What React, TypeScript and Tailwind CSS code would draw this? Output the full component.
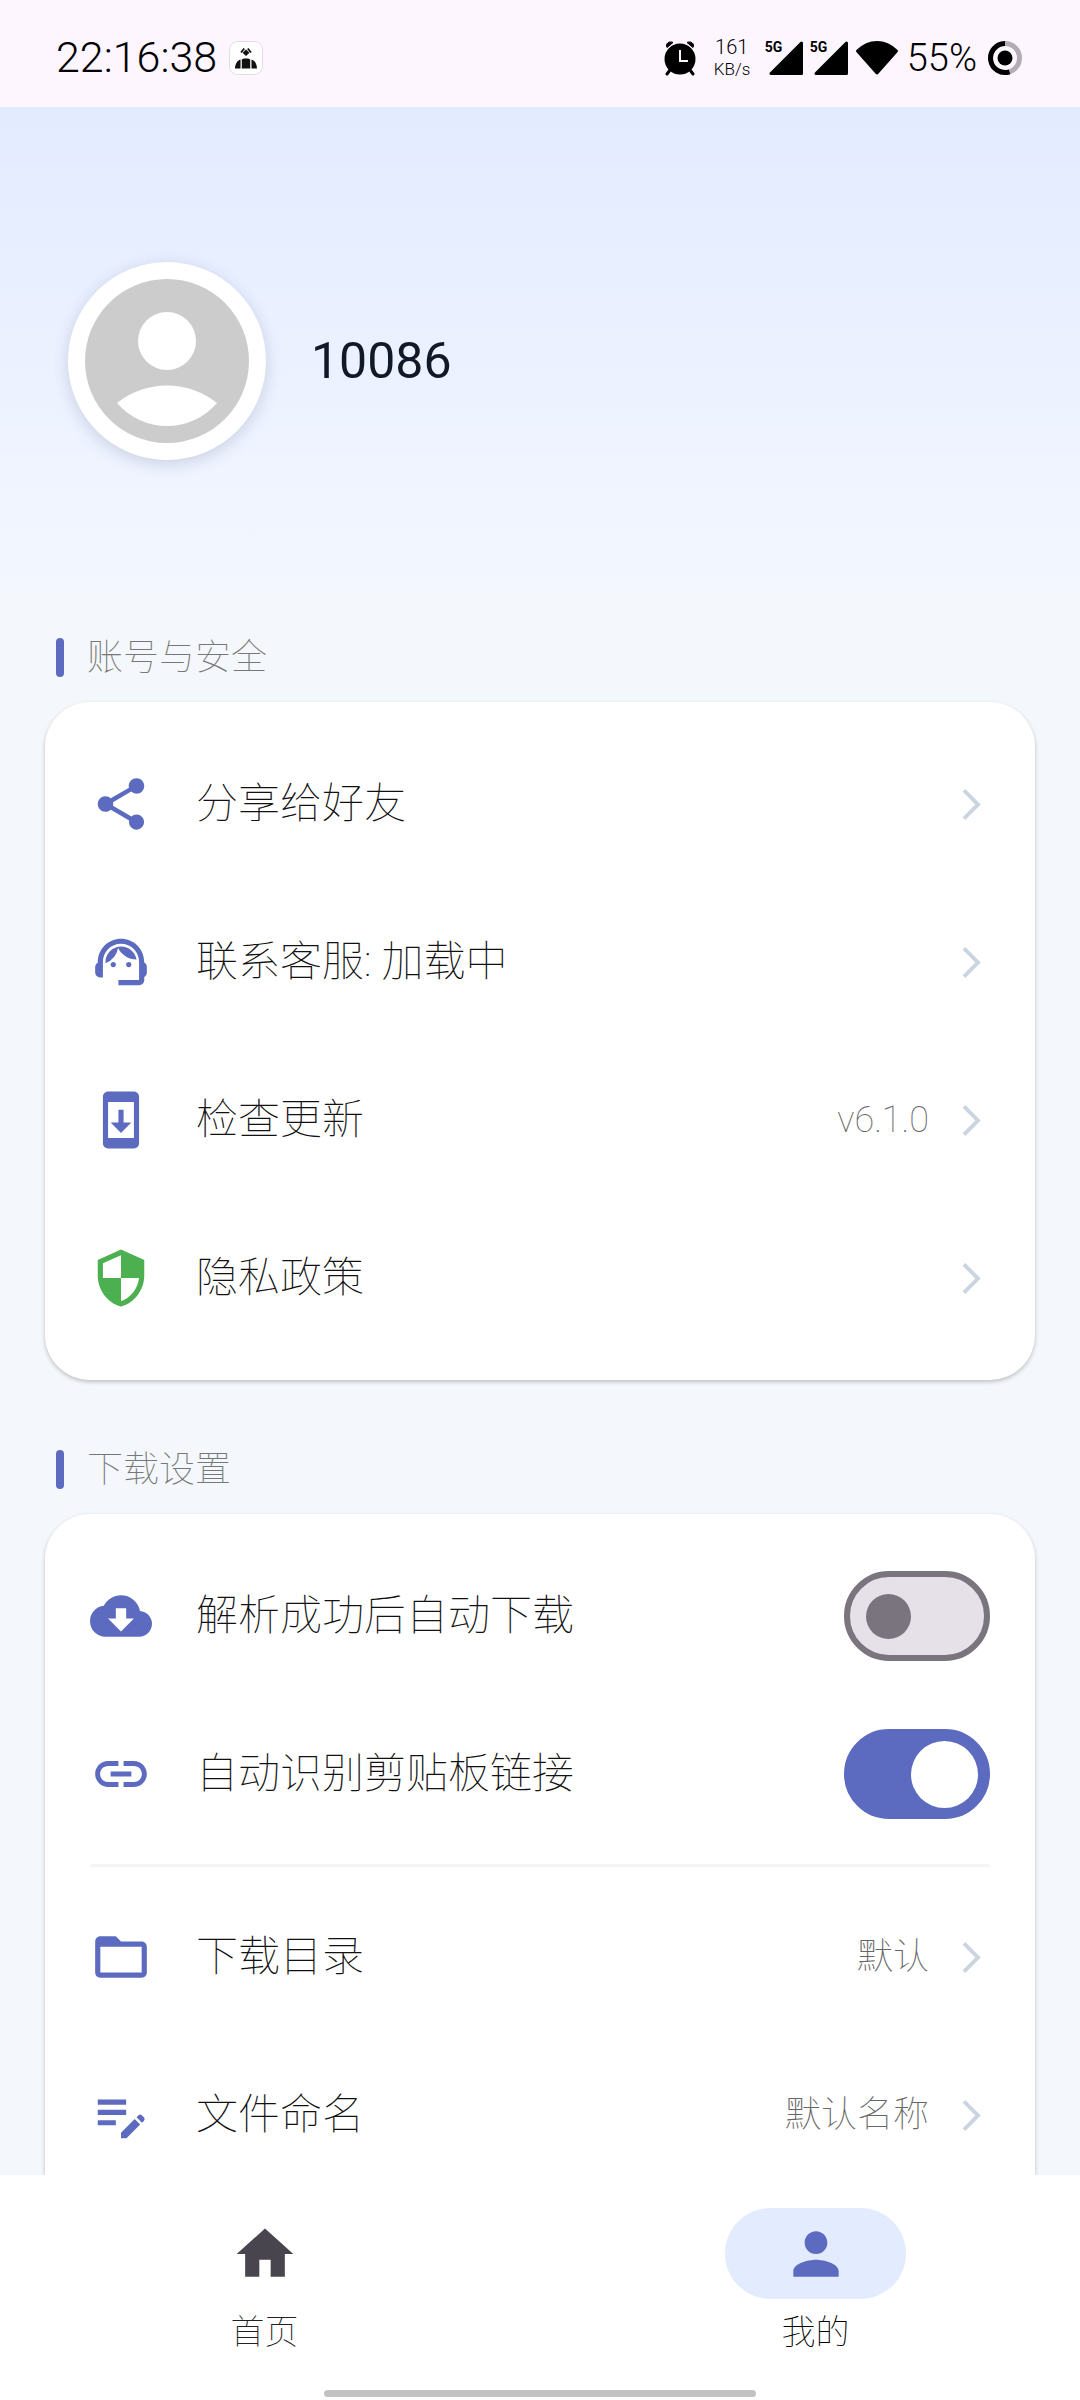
import type { ReactNode } from "react";
import type { IconType } from "react-icons";
import {
  MdArrowForwardIos,
  MdCloudDownload,
  MdEditNote,
  MdFolderOpen,
  MdHome,
  MdLink,
  MdPerson,
  MdSecurity,
  MdShare,
  MdSupportAgent,
  MdSystemUpdate,
} from "react-icons/md";

function Signal() {
  return (
    <div className="relative">
      <svg viewBox="0 0 38 36" className="h-9 w-[38px]" aria-hidden>
        <path d="M5 33.5 35.5 3v30.5z" stroke="#000" strokeWidth="3" strokeLinejoin="round" />
      </svg>
      <span className="absolute -left-px top-0 font-[Roboto] text-sm leading-[14px] font-bold">5G</span>
    </div>
  );
}

function StatusBar() {
  return (
    <div className="flex h-[107px] shrink-0 items-center justify-between bg-[#fef6ff] pt-2 pr-[57px] pl-14 text-black">
      <div className="flex items-center gap-3">
        <span className="text-[43px] leading-none">22:16:38</span>
        <svg viewBox="0 0 34 34" className="size-[34px]" aria-hidden>
          <rect x="0.5" y="0.5" width="33" height="33" rx="8" fill="#fff" stroke="#e2dde4" />
          <path d="M17 8.500l3.500 3.200L17 15l-3.500-3.300z" fill="#111" />
          <path d="M12 11.500l3.200-4M22 11.500l-3.200-4" stroke="#111" strokeWidth="1.800" />
          <path d="M12.800 18.500l2-1h4.400l2 1v9h-8.400zM11.500 18.500v9H6c.3-4.500 2-8 5.500-9zM22.500 18.500v9H28c-.3-4.500-2-8-5.500-9z" fill="#111" />
        </svg>
      </div>
      <div className="flex items-center">
        <svg viewBox="0 0 32 36" className="h-9 w-8" aria-hidden>
          <circle cx="16" cy="19" r="15.500" />
          <path d="M3 7.500C1 4 5 .5 9 2.500zM29 7.500C31 4 27 .5 23 2.500z" stroke="#000" strokeLinejoin="round" />
          <path d="M6 30l-3 4M26 30l3 4" stroke="#000" strokeWidth="3" strokeLinecap="round" />
          <path d="M16 10v11h8" fill="none" stroke="#fef6ff" strokeWidth="2" />
        </svg>
        <div className="ml-[18px] w-9 text-center">
          <div className="text-xl leading-[22px]">161</div>
          <div className="text-[17px] leading-[22px]">KB/s</div>
        </div>
        <div className="ml-4 flex gap-[7px]">
          <Signal />
          <Signal />
        </div>
        <svg viewBox="0 0 44 36" className="ml-1.5 h-9 w-11" aria-hidden>
          <path d="M2.500 11C14-.5 30-.5 41.500 11L22 33z" stroke="#000" strokeWidth="3" strokeLinejoin="round" />
        </svg>
        <span className="ml-2 text-[38px] leading-none">55%</span>
        <svg viewBox="0 0 36 36" className="ml-2.5 size-9" fill="none" aria-hidden>
          <circle cx="18" cy="18" r="14.500" stroke="#b4acb5" strokeWidth="5" />
          <path d="M18 3.500a14.500 14.500 0 1 0 4.500 28.300" stroke="#000" strokeWidth="5" />
          <circle cx="18" cy="18" r="7.500" fill="#000" />
        </svg>
      </div>
    </div>
  );
}

function Profile() {
  return (
    <header className="bg-linear-to-b from-[#e3ebff] to-[#f3f7ff] px-[68px] pt-[155px] pb-[132px]">
      <div className="flex items-center gap-[45px]">
        <div className="size-[198px] rounded-full bg-white p-[17px] shadow-[0_4px_16px_rgba(60,70,110,0.2)]">
          <svg viewBox="0 0 164 164" className="size-full" role="img" aria-label="头像">
            <circle cx="82" cy="82" r="82" fill="#ccc" />
            <circle cx="82" cy="62" r="29" fill="#fff" />
            <path d="M32 124a80 80 0 0 1 100 0a66 66 0 0 1-100 0z" fill="#fff" />
          </svg>
        </div>
        <h1 className="text-[50px] leading-none font-normal text-[#111827]">10086</h1>
      </div>
    </header>
  );
}

function Section({ title, children }: { title: string; children: ReactNode }) {
  return (
    <section className="px-[45px]">
      <div className="mb-5 flex h-[49px] items-center gap-[23px] pl-[11px]">
        <span className="h-[39px] w-2 rounded-full bg-[#5c6bc0]" />
        <h2 className="text-4xl leading-none font-thin text-[#777]">{title}</h2>
      </div>
      <div className="rounded-[45px] bg-white px-[45px] py-[23px] shadow-[0_2px_4px_rgba(0,0,0,0.22)]">{children}</div>
    </section>
  );
}

const rowClass = "flex h-[158px] w-full items-center text-left text-[42px] leading-none font-thin text-[#111]";

function LinkRow({ icon: Icon, label, value, green }: { icon: IconType; label: string; value?: string; green?: boolean }) {
  return (
    <button type="button" className={rowClass}>
      <Icon className={"mr-11 size-[62px] shrink-0 " + (green ? "text-[#4caf50]" : "text-[#5c6bc0]")} />
      <span className="flex-1">{label}</span>
      {value ? <span className="text-4xl leading-none text-[#666]">{value}</span> : null}
      <MdArrowForwardIos className="ml-6 size-[37px] text-[#cbd5e1]" />
    </button>
  );
}

function ToggleRow({ icon: Icon, label, on }: { icon: IconType; label: string; on?: boolean }) {
  return (
    <label className={rowClass}>
      <Icon className="mr-11 size-[62px] shrink-0 text-[#5c6bc0]" />
      <span className="flex-1">{label}</span>
      <input
        type="checkbox"
        role="switch"
        defaultChecked={on}
        className="flex h-[90px] w-[146px] shrink-0 appearance-none items-center rounded-full border-6 border-[#79747e] bg-[#e6e0e9] px-4 before:size-[45px] before:rounded-full before:bg-[#79747e] before:content-[''] checked:justify-end checked:border-[#5c6bc0] checked:bg-[#5c6bc0] checked:px-1.5 checked:before:size-[67px] checked:before:bg-white"
      />
    </label>
  );
}

function NavItem({ icon: Icon, label, active }: { icon: IconType; label: string; active?: boolean }) {
  return (
    <a href="#" aria-current={active ? "page" : undefined} className="flex flex-1 flex-col items-center">
      <span
        className={
          "flex h-[91px] w-[181px] items-center justify-center rounded-full " +
          (active ? "bg-[#e3ebff] text-[#5c6bc0]" : "text-[#49454f]")
        }
      >
        <Icon className="size-[68px]" />
      </span>
      <span className={"mt-4 text-[34px] leading-none font-thin " + (active ? "text-black" : "text-[#222]")}>{label}</span>
    </a>
  );
}

export default function App() {
  return (
    <div className="flex h-screen flex-col bg-white font-[Roboto,'Noto_Sans_CJK_SC',sans-serif] font-light">
      <StatusBar />
      <main className="flex min-h-0 flex-1 flex-col overflow-hidden bg-[#f4f7fb]">
        <Profile />
        <div className="flex flex-col gap-[65px] pt-[41px]">
          <Section title="账号与安全">
            <LinkRow icon={MdShare} label="分享给好友" />
            <LinkRow icon={MdSupportAgent} label="联系客服: 加载中" />
            <LinkRow icon={MdSystemUpdate} label="检查更新" value="v6.1.0" />
            <LinkRow icon={MdSecurity} label="隐私政策" green />
          </Section>
          <Section title="下载设置">
            <ToggleRow icon={MdCloudDownload} label="解析成功后自动下载" />
            <ToggleRow icon={MdLink} label="自动识别剪贴板链接" on />
            <hr className="my-[11px] border-t-3 border-[#f5f5f7]" />
            <LinkRow icon={MdFolderOpen} label="下载目录" value="默认" />
            <LinkRow icon={MdEditNote} label="文件命名" value="默认名称" />
          </Section>
        </div>
      </main>
      <nav className="shrink-0 bg-white pt-[33px] pb-[3px]">
        <div className="flex gap-[22px]">
          <NavItem icon={MdHome} label="首页" />
          <NavItem icon={MdPerson} label="我的" active />
        </div>
        <div className="mx-auto mt-[41px] h-[7px] w-2/5 rounded-full bg-[#c2c2c2]" />
      </nav>
    </div>
  );
}
